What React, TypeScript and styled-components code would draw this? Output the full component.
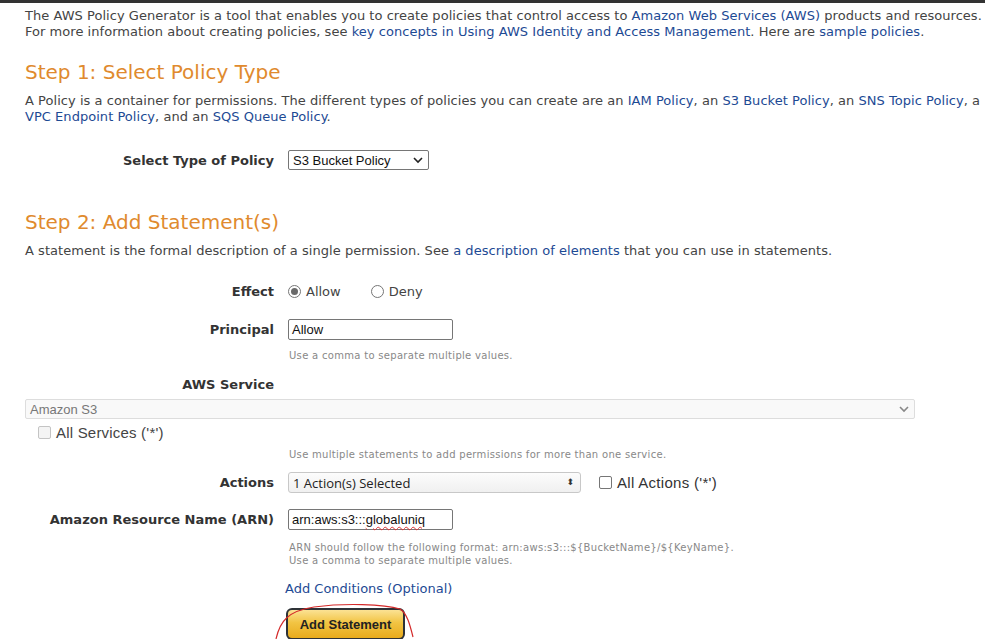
import styled, { createGlobalStyle } from "styled-components";

const GlobalStyle = createGlobalStyle`
  html, body {
    margin: 0;
    padding: 0;
    background: #fff;
    overflow: hidden;
  }
  body {
    font-family: "DejaVu Sans", Verdana, sans-serif;
    font-size: 13px;
    color: #444;
  }
`;

const Page = styled.div`
  width: 985px;
  height: 639px;
  border-top: 3px solid #333;
  box-sizing: border-box;
  overflow: hidden;
`;

const Content = styled.div`
  padding: 5px 0 0 25px;
`;

const Para = styled.p<{ $top?: number }>`
  margin: ${(p) => p.$top ?? 0}px 0 0;
  font-size: 13px;
  line-height: 16px;
  white-space: nowrap;
  letter-spacing: 0.04px;
`;

const Link = styled.a`
  color: #1d4a94;
  text-decoration: none;
`;

const Heading = styled.h2<{ $top: number }>`
  margin: ${(p) => p.$top}px 0 0;
  font-size: 20px;
  line-height: 24px;
  font-weight: normal;
  color: #e08a2e;
`;

const Row = styled.div<{ $top: number }>`
  display: grid;
  grid-template-columns: 249px 1fr;
  column-gap: 14px;
  align-items: center;
  margin-top: ${(p) => p.$top}px;
`;

const Label = styled.div`
  text-align: right;
  font-weight: bold;
  font-size: 13px;
  color: #333;
  white-space: nowrap;
`;

const Field = styled.div`
  display: flex;
  align-items: center;
`;

const SelectBox = styled.div<{ $width: number }>`
  position: relative;
  box-sizing: border-box;
  width: ${(p) => p.$width}px;
  height: 20px;
  border: 1px solid #767676;
  border-radius: 2px;
  background: #fff;
  display: flex;
  align-items: center;
  padding-left: 4px;
  font-family: "Liberation Sans", Arial, sans-serif;
  font-size: 13px;
  color: #111;
`;

const Chevron = styled.svg`
  position: absolute;
  right: 5px;
  top: 5px;
`;

const WideSelect = styled.div`
  position: relative;
  box-sizing: border-box;
  width: 890px;
  height: 20px;
  margin-top: 7px;
  border: 1px solid #ddd;
  border-radius: 2px;
  background: #f9f9f9;
  display: flex;
  align-items: center;
  padding-left: 4px;
  font-family: "Liberation Sans", Arial, sans-serif;
  font-size: 13px;
  color: #777;
`;

const ActionsSelect = styled.div`
  position: relative;
  box-sizing: border-box;
  width: 293px;
  height: 21px;
  border: 1px solid #c8c8c8;
  border-radius: 3px;
  background: linear-gradient(#fcfcfc, #f0f0f0);
  display: flex;
  align-items: center;
  padding-left: 4px;
  font-family: "Open Sans", sans-serif;
  font-size: 13px;
  color: #222;
`;

const UpDown = styled.span`
  position: absolute;
  right: 6px;
  top: 4px;
  font-size: 9px;
  line-height: 11px;
  color: #333;
  font-family: "DejaVu Sans", sans-serif;
`;

const TextInput = styled.div`
  box-sizing: border-box;
  width: 165px;
  height: 21px;
  border: 1px solid #767676;
  border-radius: 2px;
  padding-left: 3px;
  display: flex;
  align-items: center;
  font-family: "Liberation Sans", Arial, sans-serif;
  font-size: 13px;
  color: #111;
`;

const Misspelled = styled.span`
  text-decoration: underline wavy #d33;
  text-underline-offset: 2px;
  text-decoration-thickness: 1px;
`;

const Hint = styled.div<{ $top: number }>`
  margin: ${(p) => p.$top}px 0 0 264px;
  font-size: 10px;
  line-height: 13px;
  color: #888;
  white-space: nowrap;
  letter-spacing: 0.3px;
`;

const Radio = styled.span<{ $checked?: boolean }>`
  box-sizing: border-box;
  width: 13px;
  height: 13px;
  border-radius: 50%;
  border: 1px solid #767676;
  display: inline-flex;
  align-items: center;
  justify-content: center;
  margin-right: 5px;
  &::after {
    content: "";
    width: 7px;
    height: 7px;
    border-radius: 50%;
    background: ${(p) => (p.$checked ? "#6a6a6a" : "transparent")};
  }
`;

const Option = styled.span<{ $gap?: number }>`
  display: inline-flex;
  align-items: center;
  margin-right: ${(p) => p.$gap ?? 0}px;
  font-size: 13px;
  color: #444;
`;

const Check = styled.span<{ $disabled?: boolean }>`
  box-sizing: border-box;
  width: 13px;
  height: 13px;
  border-radius: 2px;
  border: 1px solid ${(p) => (p.$disabled ? "#c4c4c4" : "#767676")};
  background: ${(p) => (p.$disabled ? "#f4f4f4" : "#fff")};
  margin-right: 5px;
`;

const CheckLabel = styled.label<{ $disabled?: boolean; $left: number; $top: number }>`
  display: flex;
  align-items: center;
  margin: ${(p) => p.$top}px 0 0 ${(p) => p.$left}px;
  font-family: "Liberation Sans", Arial, sans-serif;
  font-size: 15px;
  letter-spacing: 0.2px;
  color: ${(p) => (p.$disabled ? "#444" : "#333")};
`;

const InlineCheck = styled.label`
  display: flex;
  align-items: center;
  margin-left: 18px;
  font-family: "Liberation Sans", Arial, sans-serif;
  font-size: 15px;
  letter-spacing: 0.3px;
  color: #333;
`;

const ConditionsLink = styled(Link)`
  display: block;
  margin: 14px 0 0 260px;
  font-size: 13px;
  line-height: 16px;
`;

const ButtonWrap = styled.div`
  position: relative;
  margin: 11px 0 0 261px;
  width: 120px;
`;

const Button = styled.button`
  box-sizing: border-box;
  width: 119px;
  height: 32px;
  border: 2px solid #2e3237;
  border-radius: 6px;
  background: linear-gradient(#fbe294, #f2c443 45%, #e9ab1c);
  font-family: "Liberation Sans", Arial, sans-serif;
  font-weight: bold;
  font-size: 13px;
  color: #222;
  padding: 0;
`;

const Annotation = styled.svg`
  position: absolute;
  left: -12px;
  top: -5px;
  pointer-events: none;
`;

const ChevronIcon = ({ color }: { color: string }) => (
  <Chevron width="10" height="8" viewBox="0 0 10 8">
    <path d="M1 2 L5 6 L9 2" fill="none" stroke={color} strokeWidth="1.6" />
  </Chevron>
);

const App = () => {
  return (
    <Page>
      <GlobalStyle />
      <Content>
        <Para>
          The AWS Policy Generator is a tool that enables you to create policies that control access to{" "}
          <Link>Amazon Web Services (AWS)</Link> products and resources.
          <br />
          For more information about creating policies, see{" "}
          <Link>key concepts in Using AWS Identity and Access Management</Link>. Here are{" "}
          <Link>sample policies</Link>.
        </Para>

        <Heading $top={20}>Step 1: Select Policy Type</Heading>
        <Para $top={9}>
          A Policy is a container for permissions. The different types of policies you can create are an{" "}
          <Link>IAM Policy</Link>, an <Link>S3 Bucket Policy</Link>, an <Link>SNS Topic Policy</Link>, a
          <br />
          <Link>VPC Endpoint Policy</Link>, and an <Link>SQS Queue Policy</Link>.
        </Para>

        <Row $top={25}>
          <Label>Select Type of Policy</Label>
          <Field>
            <SelectBox $width={141}>
              S3 Bucket Policy
              <ChevronIcon color="#222" />
            </SelectBox>
          </Field>
        </Row>

        <Heading $top={40}>Step 2: Add Statement(s)</Heading>
        <Para $top={9}>
          A statement is the formal description of a single permission. See{" "}
          <Link>a description of elements</Link> that you can use in statements.
        </Para>

        <Row $top={25}>
          <Label>Effect</Label>
          <Field>
            <Option $gap={30}>
              <Radio $checked />
              Allow
            </Option>
            <Option>
              <Radio />
              Deny
            </Option>
          </Field>
        </Row>

        <Row $top={20}>
          <Label>Principal</Label>
          <Field>
            <TextInput>Allow</TextInput>
          </Field>
        </Row>
        <Hint $top={9}>Use a comma to separate multiple values.</Hint>

        <Row $top={15}>
          <Label>AWS Service</Label>
          <div />
        </Row>
        <WideSelect>
          Amazon S3
          <ChevronIcon color="#888" />
        </WideSelect>
        <CheckLabel $disabled $left={13} $top={5}>
          <Check $disabled />
          All Services ('*')
        </CheckLabel>
        <Hint $top={7}>Use multiple statements to add permissions for more than one service.</Hint>

        <Row $top={11}>
          <Label>Actions</Label>
          <Field>
            <ActionsSelect>
              1 Action(s) Selected
              <UpDown>⬍</UpDown>
            </ActionsSelect>
            <InlineCheck>
              <Check />
              All Actions ('*')
            </InlineCheck>
          </Field>
        </Row>

        <Row $top={16}>
          <Label>Amazon Resource Name (ARN)</Label>
          <Field>
            <TextInput>
              arn:aws:s3:::<Misspelled>globaluniq</Misspelled>
            </TextInput>
          </Field>
        </Row>
        <Hint $top={11}>
          ARN should follow the following format: arn:aws:s3:::$&#123;BucketName&#125;/$&#123;KeyName&#125;.
          <br />
          Use a comma to separate multiple values.
        </Hint>

        <ConditionsLink>Add Conditions (Optional)</ConditionsLink>

        <ButtonWrap>
          <Button>Add Statement</Button>
          <Annotation width="145" height="40" viewBox="0 0 145 40">
            <path
              d="M2 36 C 6 18, 14 8, 40 4 C 70 0, 110 1, 126 6 C 133 10, 136 22, 139 34"
              fill="none"
              stroke="#d42a2a"
              strokeWidth="1.2"
            />
          </Annotation>
        </ButtonWrap>
      </Content>
    </Page>
  );
};

export default App;
